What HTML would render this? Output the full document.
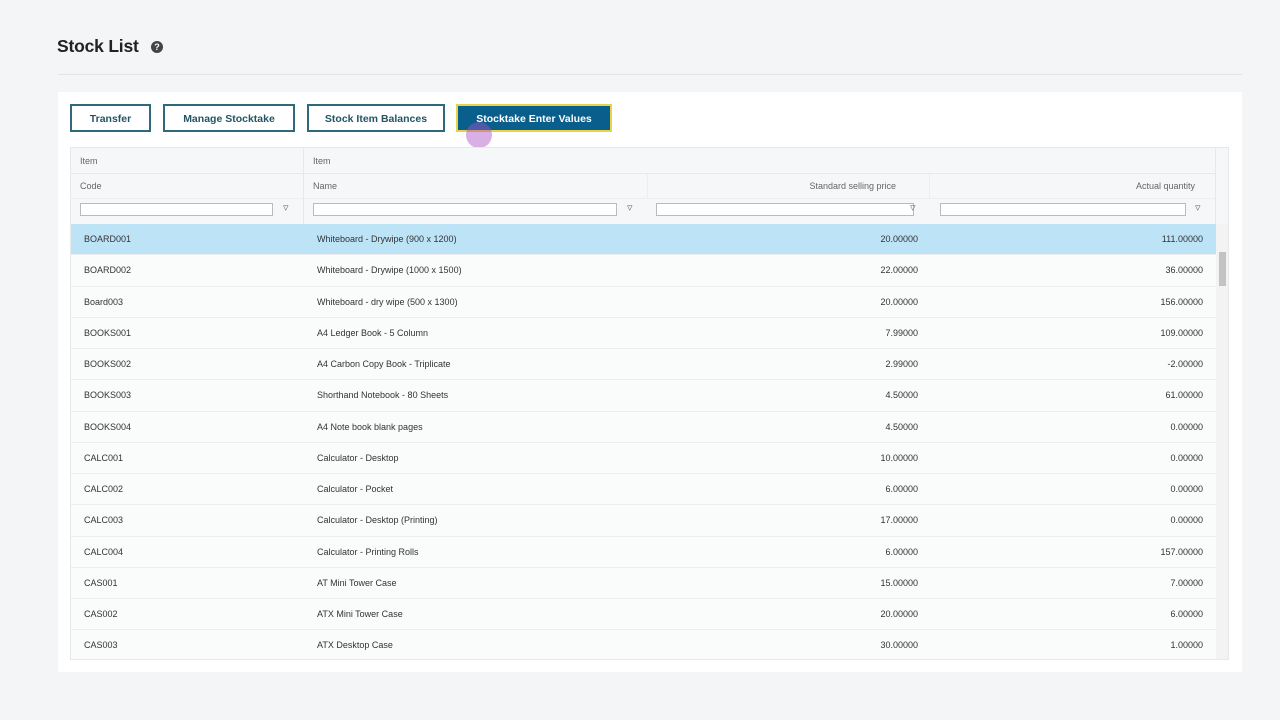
<!DOCTYPE html><html><head><style>
body{margin:0;width:1280px;height:720px;background:#f3f5f6;font-family:"Liberation Sans",sans-serif;position:relative;overflow:hidden}
.t{position:absolute;left:57px;top:36px;font-size:17.5px;font-weight:bold;color:#222;letter-spacing:-0.2px}
.q{position:absolute;left:151px;top:41px;width:12px;height:12px;border-radius:50%;background:#444;color:#fff;font-size:9px;font-weight:bold;text-align:center;line-height:12px}
.hr{position:absolute;left:58px;top:74px;width:1184px;height:1px;background:#e3e6e8}
.card{position:absolute;left:58px;top:92px;width:1184px;height:580px;background:#fff}
.b{position:absolute;top:104px;height:28px;border:2px solid #2f6a7c;box-sizing:border-box;background:#fff;color:#235566;font-size:10.5px;font-weight:bold;text-align:center;line-height:26px}
.tbl{position:absolute;left:70px;top:147px;width:1159px;height:513px;border:1px solid #e6e8ea;box-sizing:border-box;font-size:9px;color:#333;overflow:hidden}
.hd{position:absolute;left:0;width:1159px;background:#f6f7f8;color:#666}
.row{position:absolute;left:0;width:1145px;height:31.25px;border-bottom:1px solid #eceef0;box-sizing:border-box;background:#fafbfb}
.row span{position:absolute;top:10px}
.f{position:absolute;top:55px;height:13px;border:1px solid #bbb;background:#fff;box-sizing:border-box}
.fi{position:absolute;top:53px;font-size:11px;color:#777}
.sb{position:absolute;left:1145px;top:76px;width:13px;height:437px;background:#f3f3f3}
</style></head><body>
<div class="t">Stock List</div><div class="q">?</div>
<div class="hr"></div>
<div class="card"></div>
<div class="b" style="left:70px;width:81px">Transfer</div>
<div class="b" style="left:163px;width:132px">Manage Stocktake</div>
<div class="b" style="left:307px;width:138px">Stock Item Balances</div>
<div class="b" style="left:456px;width:156px;background:#0a5e8c;border-color:#e8d24a;color:#fff">Stocktake Enter Values</div>
<div style="position:absolute;left:466px;top:122px;width:26px;height:26px;border-radius:50%;background:rgba(170,80,200,.45)"></div>
<div class="tbl">
<div class="hd" style="top:0;height:76px"></div>
<div style="position:absolute;left:0;top:25px;width:1145px;height:1px;background:#e6e8ea"></div>
<div style="position:absolute;left:0;top:50px;width:1145px;height:1px;background:#eceef0"></div>
<div style="position:absolute;left:232px;top:0;width:1px;height:513px;background:#e6e8ea"></div>
<div style="position:absolute;left:1144px;top:0;width:1px;height:76px;background:#e6e8ea"></div>
<div style="position:absolute;left:9px;top:8px;color:#666">Item</div>
<div style="position:absolute;left:242px;top:8px;color:#666">Item</div>
<div style="position:absolute;left:9px;top:33px;color:#666">Code</div>
<div style="position:absolute;left:242px;top:33px;color:#666">Name</div>
<div style="position:absolute;left:576px;top:26px;width:1px;height:24px;background:#eceef0"></div>
<div style="position:absolute;left:858px;top:26px;width:1px;height:24px;background:#eceef0"></div>
<div style="position:absolute;right:332px;top:33px;color:#666;white-space:nowrap">Standard selling price</div>
<div style="position:absolute;right:33px;top:33px;color:#666;white-space:nowrap">Actual quantity</div>
<div class="f" style="left:9px;width:193px"></div><div class="fi" style="left:212px">▿</div>
<div class="f" style="left:242px;width:304px"></div><div class="fi" style="left:556px">▿</div>
<div class="f" style="left:585px;width:258px"></div><div class="fi" style="left:839px">▿</div>
<div class="f" style="left:869px;width:246px"></div><div class="fi" style="left:1124px">▿</div>
<div id="rows"></div>
<div class="sb"><div style="position:absolute;left:3px;top:28px;width:7px;height:34px;background:#c3c3c3"></div></div>
</div>
<script>
var d=[["BOARD001","Whiteboard - Drywipe (900 x 1200)","20.00000","111.00000"],["BOARD002","Whiteboard - Drywipe (1000 x 1500)","22.00000","36.00000"],["Board003","Whiteboard - dry wipe (500 x 1300)","20.00000","156.00000"],["BOOKS001","A4 Ledger Book - 5 Column","7.99000","109.00000"],["BOOKS002","A4 Carbon Copy Book - Triplicate","2.99000","-2.00000"],["BOOKS003","Shorthand Notebook - 80 Sheets","4.50000","61.00000"],["BOOKS004","A4 Note book blank pages","4.50000","0.00000"],["CALC001","Calculator - Desktop","10.00000","0.00000"],["CALC002","Calculator - Pocket","6.00000","0.00000"],["CALC003","Calculator - Desktop (Printing)","17.00000","0.00000"],["CALC004","Calculator - Printing Rolls","6.00000","157.00000"],["CAS001","AT Mini Tower Case","15.00000","7.00000"],["CAS002","ATX Mini Tower Case","20.00000","6.00000"],["CAS003","ATX Desktop Case","30.00000","1.00000"],["CAS004","ATX Tower Case","35.00000","2.00000"]];
var h="";d.forEach(function(r,i){h+='<div class="row" style="top:'+(76+i*31.25)+'px;'+(i==0?'background:#bde3f7':'')+'"><span style="left:13px">'+r[0]+'</span><span style="left:246px">'+r[1]+'</span><span style="right:298px">'+r[2]+'</span><span style="right:13px">'+r[3]+'</span></div>'});
document.getElementById("rows").innerHTML=h;
</script>
</body></html>
